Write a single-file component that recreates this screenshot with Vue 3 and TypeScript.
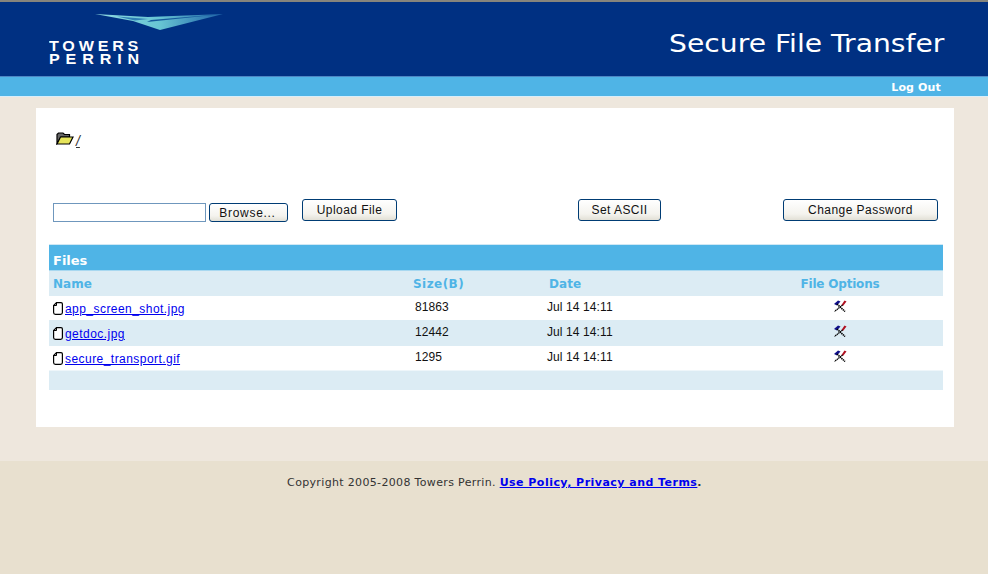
<script setup lang="ts">
interface FileRow { name: string; size: string; date: string }
const files: FileRow[] = [
  { name: 'app_screen_shot.jpg', size: '81863', date: 'Jul 14 14:11' },
  { name: 'getdoc.jpg', size: '12442', date: 'Jul 14 14:11' },
  { name: 'secure_transport.gif', size: '1295', date: 'Jul 14 14:11' },
]
</script>

<template>
  <div class="page">
    <header class="header">
      <div class="logo">
        <svg class="wing" width="130" height="18" viewBox="0 0 130 18">
          <defs>
            <linearGradient id="wingFill" x1="0" y1="0" x2="1" y2="0">
              <stop offset="0" stop-color="#8fd8e0" />
              <stop offset="0.5" stop-color="#68c6d4" />
              <stop offset="1" stop-color="#1f62a8" />
            </linearGradient>
          </defs>
          <polygon points="0,0 53,3 128,0 65,16 38,7" fill="url(#wingFill)" />
          <polygon points="22,2.6 53,5 40,6.5" fill="#2f7fb5" />
          <polygon points="52,8 128,0 56,6" fill="#155a9c" />
        </svg>
        <div class="logo-text">
          <span class="towers">TOWERS</span>
          <span class="perrin">PERRIN</span>
        </div>
      </div>
      <div class="title">Secure File Transfer</div>
    </header>
    <nav class="nav"><a class="logout">Log Out</a></nav>
    <main class="body">
      <section class="card">
        <div class="path">
          <svg width="18" height="13" viewBox="0 0 18 13">
            <path d="M1 2.5 L2.5 1 H7 L8.5 2.5 H13.5 V5 H5 L1 11.5 Z" fill="#666" stroke="#000" stroke-width="1.2" />
            <path d="M1 12 L4.5 5 H17 L13.5 12 Z" fill="#e6e45a" stroke="#000" stroke-width="1.2" />
          </svg>
          <a class="root">/</a>
        </div>
        <div class="toolbar">
          <div class="upload">
            <span class="file-input"></span>
            <button class="btn browse">Browse...</button>
          </div>
          <button class="btn up">Upload File</button>
          <button class="btn ascii">Set ASCII</button>
          <button class="btn pass">Change Password</button>
        </div>
        <div class="table">
          <div class="caption">Files</div>
          <div class="row head">
            <span class="c-name">Name</span>
            <span class="c-size">Size(B)</span>
            <span class="c-date">Date</span>
            <span class="c-opt">File Options</span>
          </div>
          <div v-for="(f, i) in files" :key="f.name" class="row item" :class="{ alt: i === 1 }">
            <span class="c-name name-cell">
              <svg width="10" height="13" viewBox="0 0 10 13">
                <path d="M3.5 .6 H8 Q9.4 .6 9.4 2 V10.6 Q9.4 12.4 7.6 12.4 H2.4 Q.6 12.4 .6 10.6 V3.5 Z" fill="#fff" stroke="#000" stroke-width="1.2" />
                <path d="M3.5 1 V3.5 H1" fill="none" stroke="#000" />
              </svg>
              <a class="link">{{ f.name }}</a>
            </span>
            <span class="c-size val">{{ f.size }}</span>
            <span class="c-date val">{{ f.date }}</span>
            <span class="c-opt">
              <svg width="14" height="12" viewBox="0 0 14 12">
                <path d="M1 4 L5 0.5 L7.5 1.5 L4 5.5 Z" fill="#10108a" />
                <path d="M8.5 5 L11.5 .5 L13.5 1.5 L10 6 Z" fill="#b01020" />
                <path d="M4 4 L12 11.5" stroke="#000" stroke-width="1.6" stroke-dasharray="1.4 .6" />
                <path d="M9.5 5 L1.5 11.5" stroke="#000" stroke-width="1.3" stroke-dasharray="1.4 .6" />
              </svg>
            </span>
          </div>
          <div class="row tail"></div>
        </div>
      </section>
    </main>
    <footer class="footer">
      Copyright 2005-2008 Towers Perrin. <a class="policy">Use Policy, Privacy and Terms</a><b>.</b>
    </footer>
  </div>
</template>

<style>
html, body { margin: 0; background: #e8e0cf; }
</style>

<style scoped>
.page {
  width: 988px;
  height: 574px;
  display: flex;
  flex-direction: column;
  overflow: hidden;
  font-family: "Liberation Sans", Arial, sans-serif;
}
.header {
  height: 74px;
  flex: none;
  border-top: 2px solid #86847c;
  background: #003082;
  display: flex;
  justify-content: space-between;
  color: #fff;
}
.logo {
  padding: 12px 0 0 49px;
  display: flex;
  flex-direction: column;
}
.wing { margin-left: 46px; }
.logo-text {
  margin-top: 8px;
  font: bold 14px/13px "Liberation Sans", Arial, sans-serif;
  display: flex;
  flex-direction: column;
  transform: scaleX(1.15);
  transform-origin: left;
}
.towers { letter-spacing: 3.3px; }
.perrin { letter-spacing: 5.1px; }
.title {
  padding: 27px 38.5px 0 0;
  font: 25px/30px "DejaVu Sans", sans-serif;
  transform: scaleX(1.127);
  transform-origin: right;
  white-space: nowrap;
}
.nav {
  height: 19px;
  flex: none;
  border-top: 1px solid #4d86c4;
  background: #4fb4e6;
  display: flex;
  justify-content: flex-end;
  align-items: center;
  padding-right: 47px;
}
.logout {
  color: #fff;
  font: bold 11px "DejaVu Sans", sans-serif;
  letter-spacing: .15px;
  margin-top: 2px;
}
.body {
  height: 365px;
  flex: none;
  padding: 11px 34px 0 36px;
  box-sizing: border-box;
  background: #eee7dd;
  border-top: 1px solid #d9eefa;
}
.card {
  width: 918px;
  height: 319px;
  background: #fff;
  box-sizing: border-box;
  padding: 24px 11px 0 13px;
}
.path {
  height: 67px;
  padding-left: 7px;
  display: flex;
  align-items: flex-start;
  gap: 2px;
}
.root {
  color: #333;
  font-size: 14px;
  line-height: 16px;
  margin-top: 1px;
  text-decoration: underline;
  font-style: italic;
}
.toolbar {
  height: 45px;
  padding-left: 4px;
  display: flex;
  align-items: flex-start;
}
.upload {
  display: flex;
  gap: 3px;
  padding-top: 4px;
}
.file-input {
  width: 151px;
  height: 17px;
  border: 1px solid #6f97bd;
  background: #fff;
}
.btn {
  height: 22px;
  padding: 0;
  font: 12px "Liberation Sans", Arial, sans-serif;
  color: #111;
  letter-spacing: .45px;
  border: 1px solid #003c74;
  border-radius: 3px;
  background: linear-gradient(#fff, #f4f3ee 70%, #e2e0d6);
}
.browse { width: 79px; height: 19px; letter-spacing: .7px; padding-right: 2px; }
.up { width: 95px; margin-left: 14px; }
.ascii { width: 83px; margin-left: 181px; }
.pass { width: 155px; margin-left: 122px; }
.table {
  width: 894px;
  border-top: 1px solid #cfe8f5;
}
.caption {
  height: 25px;
  background: #4fb4e6;
  color: #fff;
  font: bold 13px/31px "DejaVu Sans", sans-serif;
  padding-left: 4px;
  border-bottom: 1px solid #a8d8f0;
}
.row {
  display: grid;
  grid-template-columns: 364px 134px 204px 178px;
  align-items: center;
}
.head {
  height: 25px;
  background: #dcecf4;
  color: #4fb4e6;
  font: bold 12px "DejaVu Sans", sans-serif;
  letter-spacing: .05px;
}
.head .c-name { padding-left: 4px; }
.head .c-size { letter-spacing: .45px; }
.head .c-date { padding-left: 2px; }
.head .c-opt { letter-spacing: -.2px; }
.item { height: 24px; background: #fff; }
.alt { height: 26px; background: #dcecf4; }
.tail { height: 19px; background: #dcecf4; border-top: 1px solid #eef6fa; }
.c-opt { text-align: center; display: block; white-space: nowrap; }
.item .c-opt { line-height: 0; padding-bottom: 4px; }
.name-cell {
  display: flex;
  align-items: center;
  gap: 2px;
  padding-left: 4px;
}
.link {
  color: #0000ee;
  text-decoration: underline;
  font-size: 12px;
  letter-spacing: .45px;
  position: relative;
  top: 1px;
}
.val {
  font-size: 12px;
  color: #111;
  letter-spacing: .1px;
  padding-bottom: 2px;
}
.c-size.val { padding-left: 2px; }
.footer {
  flex: 1;
  background: #e8e0cf;
  padding-top: 15px;
  padding-left: 1px;
  text-align: center;
  font: 11px "DejaVu Sans", sans-serif;
  letter-spacing: .34px;
  color: #333;
}
.policy {
  color: #0000ee;
  font-weight: bold;
  letter-spacing: .47px;
  text-decoration: underline;
}
</style>
